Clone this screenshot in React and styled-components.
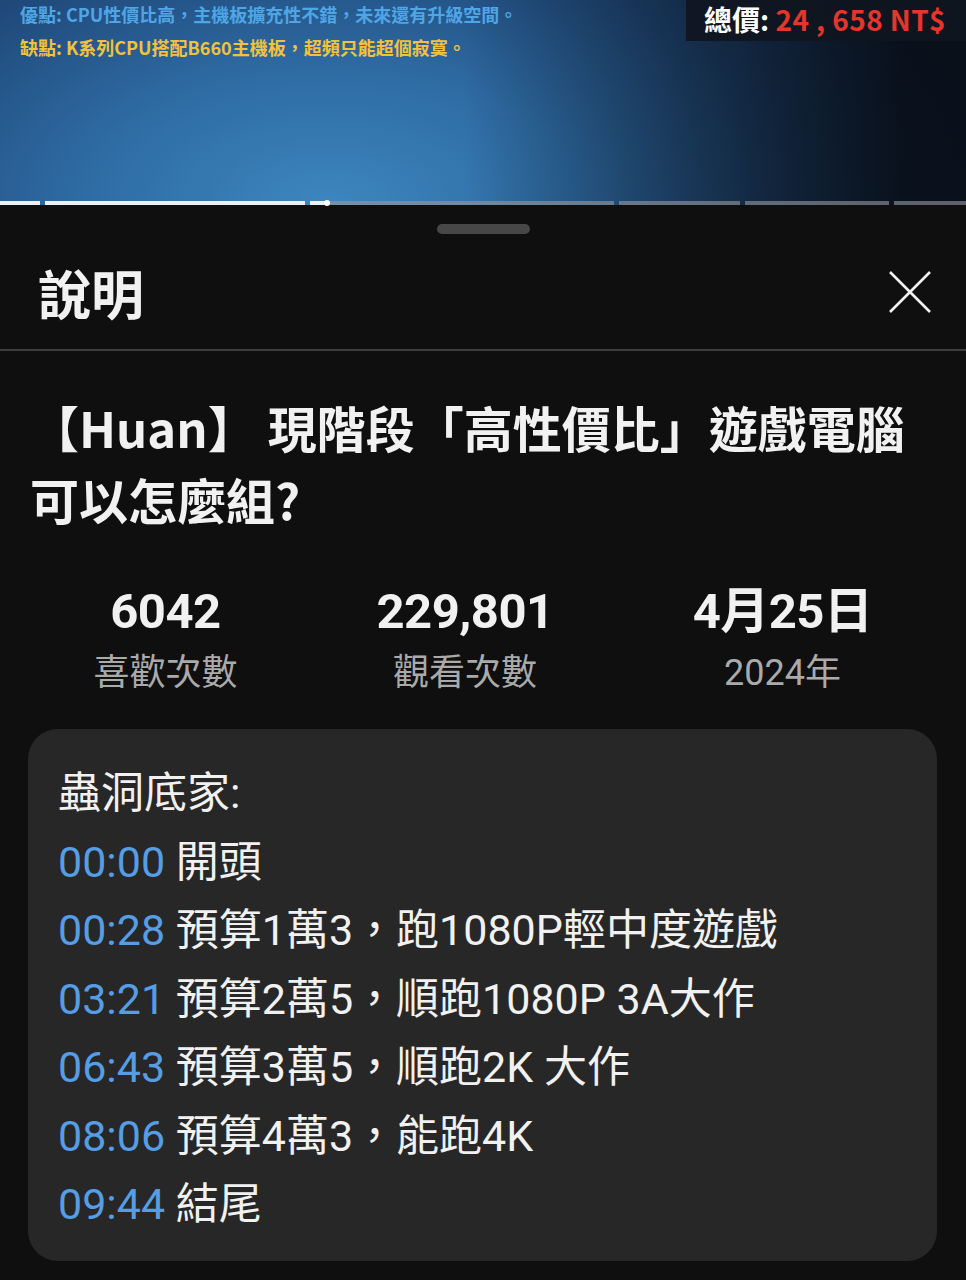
import React from "react";
import styled, { createGlobalStyle } from "styled-components";

const GlobalStyle = createGlobalStyle`
  html, body {
    margin: 0;
    padding: 0;
    background: #0f0f0f;
  }
  body {
    font-family: "Roboto", "Noto Sans CJK TC", "Noto Sans", sans-serif;
    color: #f1f1f1;
  }
  * {
    box-sizing: border-box;
  }
`;

const chapters = [
  { width: 40, played: 1 },
  { width: 259, played: 1 },
  { width: 303, played: 16 / 303 },
  { width: 121, played: 0 },
  { width: 143, played: 0 },
  { width: 72, played: 0 },
];

const timeline = [
  { time: "00:00", label: "開頭" },
  { time: "00:28", label: "預算1萬3，跑1080P輕中度遊戲" },
  { time: "03:21", label: "預算2萬5，順跑1080P 3A大作" },
  { time: "06:43", label: "預算3萬5，順跑2K 大作" },
  { time: "08:06", label: "預算4萬3，能跑4K" },
  { time: "09:44", label: "結尾" },
];

const stats = [
  { value: "6042", label: "喜歡次數" },
  { value: "229,801", label: "觀看次數" },
  { value: "4月25日", label: "2024年" },
];

export default function App() {
  return (
    <>
      <GlobalStyle />
      <Page>
        <Video>
          <Frame>
            <Notes>
              <Note $color="#4ea6e6">
                優點: CPU性價比高，主機板擴充性不錯，未來還有升級空間。
              </Note>
              <Note $color="#f1c23e">
                缺點: K系列CPU搭配B660主機板，超頻只能超個寂寞。
              </Note>
            </Notes>
            <PriceTag>
              總價: <Red>24 , 658 NT$</Red>
            </PriceTag>
          </Frame>
          <Progress>
            {chapters.map((c, i) => (
              <Chapter key={i} style={{ flexGrow: c.width }}>
                <Played style={{ width: `${c.played * 100}%` }} />
                {c.played > 0 && c.played < 1 && <Knob />}
              </Chapter>
            ))}
          </Progress>
        </Video>

        <Sheet>
          <Handle />
          <Header>
            <HeaderTitle>說明</HeaderTitle>
            <CloseButton aria-label="close">
              <svg width="42" height="42" viewBox="0 0 42 42">
                <path
                  d="M1 1 L41 41 M41 1 L1 41"
                  stroke="#f1f1f1"
                  strokeWidth="2.6"
                  fill="none"
                />
              </svg>
            </CloseButton>
          </Header>
          <Divider />

          <Title>【Huan】 現階段「高性價比」遊戲電腦可以怎麼組?</Title>

          <Stats>
            {stats.map((s) => (
              <Stat key={s.label}>
                <StatValue>{s.value}</StatValue>
                <StatLabel>{s.label}</StatLabel>
              </Stat>
            ))}
          </Stats>

          <Description>
            <Line>蟲洞底家:</Line>
            {timeline.map((t) => (
              <Line key={t.time}>
                <Stamp>{t.time}</Stamp> {t.label}
              </Line>
            ))}
          </Description>
        </Sheet>
      </Page>
    </>
  );
}

const Page = styled.div`
  width: 966px;
  min-height: 1280px;
  background: #0f0f0f;
  overflow: hidden;
`;

const Video = styled.div`
  display: flex;
  flex-direction: column;
  height: 205px;
  background:
    linear-gradient(90deg, rgba(6, 9, 14, 0) 48%, rgba(6, 9, 14, 0.85) 94%),
    radial-gradient(ellipse 660px 360px at 34% 100%, #3d86bf 0%, #2e6ba3 38%, #204a7b 72%, #183660 100%);
  background-color: #14305a;
`;

const Frame = styled.div`
  flex: 1;
  display: flex;
  justify-content: space-between;
  align-items: flex-start;
`;

const Notes = styled.div`
  display: flex;
  flex-direction: column;
  gap: 7px;
  padding: 1px 0 0 20px;
`;

const Note = styled.div`
  font-family: "Noto Sans CJK TC", sans-serif;
  font-weight: 700;
  font-size: 18px;
  line-height: 26px;
  color: ${(p) => p.$color};
  white-space: nowrap;
`;

const PriceTag = styled.div`
  height: 41px;
  width: 280px;
  padding: 0 0 0 18px;
  background: rgba(16, 22, 32, 0.92);
  font-family: "Noto Sans CJK TC", sans-serif;
  font-weight: 700;
  font-size: 28px;
  line-height: 38px;
  color: #ffffff;
  white-space: nowrap;
`;

const Red = styled.span`
  color: #e8342a;
  letter-spacing: 0.4px;
`;

const Progress = styled.div`
  display: flex;
  gap: 5px;
  height: 4px;
`;

const Chapter = styled.div`
  position: relative;
  flex-basis: 0;
  height: 4px;
  background: rgba(150, 154, 160, 0.6);
`;

const Played = styled.div`
  height: 100%;
  background: #e9f0f6;
`;

const Knob = styled.div`
  position: absolute;
  left: 14px;
  top: -1px;
  width: 6px;
  height: 6px;
  border-radius: 50%;
  background: #ffffff;
`;

const Sheet = styled.div`
  background: #0f0f0f;
  border-radius: 26px 26px 0 0;
  padding-top: 19px;
  display: flex;
  flex-direction: column;
`;

const Handle = styled.div`
  align-self: center;
  width: 93px;
  height: 10px;
  border-radius: 5px;
  background: #474747;
`;

const Header = styled.div`
  height: 115px;
  display: flex;
  align-items: center;
  justify-content: space-between;
  padding: 0 35px 0 38px;
`;

const HeaderTitle = styled.h2`
  margin: 0;
  font-family: "Noto Sans CJK TC", sans-serif;
  font-size: 53px;
  font-weight: 700;
  line-height: 60px;
  color: #f1f1f1;
`;

const CloseButton = styled.button`
  display: flex;
  padding: 0;
  border: 0;
  background: none;
`;

const Divider = styled.div`
  height: 2px;
  background: #3d3d3d;
`;

const Title = styled.h1`
  margin: 0;
  padding: 40px 30px 0 30px;
  font-family: "Noto Sans CJK TC", sans-serif;
  font-size: 49px;
  font-weight: 700;
  line-height: 72px;
  color: #f1f1f1;
`;

const Stats = styled.div`
  display: flex;
  justify-content: space-around;
  padding: 49px 24px 0;
`;

const Stat = styled.div`
  display: flex;
  flex-direction: column;
  align-items: center;
  gap: 9px;
`;

const StatValue = styled.div`
  font-size: 49px;
  font-weight: 700;
  line-height: 56px;
  color: #f1f1f1;
  letter-spacing: -0.5px;
`;

const StatLabel = styled.div`
  font-size: 36px;
  line-height: 48px;
  color: #aaaaaa;
`;

const Description = styled.div`
  margin: 32px 29px 0 28px;
  padding: 30px 30px 22px;
  border-radius: 30px;
  background: #272727;
`;

const Line = styled.div`
  font-size: 43px;
  line-height: 68.5px;
  color: #f1f1f1;
  white-space: nowrap;
`;

const Stamp = styled.span`
  color: #559ee6;
`;
